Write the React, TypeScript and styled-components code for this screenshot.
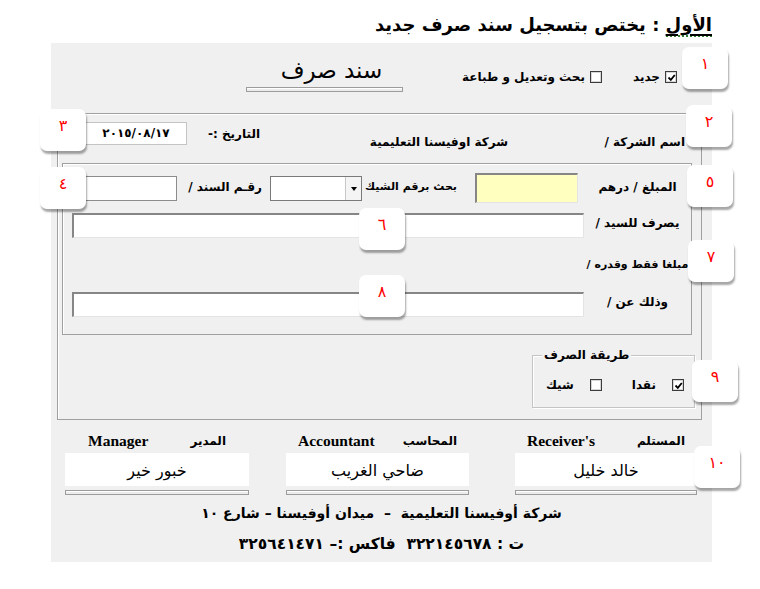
import React from 'react';
import styled, { createGlobalStyle } from 'styled-components';

const AR = `'DejaVu Sans', 'Liberation Sans', sans-serif`;
const SERIF = `'Liberation Serif', 'DejaVu Serif', serif`;

const GlobalStyle = createGlobalStyle`
  html, body {
    margin: 0;
    padding: 0;
    background: #fff;
  }
  body {
    font-family: ${AR};
  }
`;

const Page = styled.div`
  position: relative;
  width: 760px;
  height: 589px;
  overflow: hidden;
`;

const Heading = styled.h1`
  margin: 0;
  height: 43px;
  box-sizing: border-box;
  padding: 12px 48px 0 0;
  direction: rtl;
  font: bold 18px ${AR};
  line-height: 26px;
  color: #000;
`;

const Underlined = styled.span`
  text-decoration: underline;
  text-decoration-thickness: 2px;
  text-underline-offset: 3px;
  border-bottom: 2px dotted #2f7d32;
`;

const Panel = styled.div`
  margin-left: 51px;
  width: 661px;
  height: 519px;
  background: #f0f0f0;
  direction: rtl;
  display: flex;
  flex-direction: column;
`;

const TopBar = styled.div`
  height: 70px;
  display: grid;
  grid-template-columns: 309px 157px;
  align-items: start;
`;

const CheckRow = styled.div<{ $pad: string; $gap: number }>`
  display: flex;
  align-items: center;
  padding: ${p => p.$pad};
  gap: ${p => p.$gap}px;
`;

const CheckItem = styled.label<{ $gap: number }>`
  display: flex;
  align-items: center;
  gap: ${p => p.$gap}px;
`;

const Box = styled.span`
  box-sizing: border-box;
  width: 12px;
  height: 12px;
  background: #fff;
  border: 1px solid #3c3c3c;
  box-shadow: inset 0 0 0 1px #d6d6d6;
  display: flex;
  align-items: center;
  justify-content: center;
  flex: none;
`;

const Label = styled.span<{ $size?: number }>`
  font: bold ${p => p.$size ?? 12}px ${AR};
  line-height: 18px;
  color: #000;
  white-space: nowrap;
`;

const TitleBlock = styled.div`
  display: flex;
  flex-direction: column;
  align-items: center;
  padding-top: 12px;
`;

const Title = styled.div`
  font: 23px ${AR};
  line-height: 31px;
  color: #000;
  padding-left: 14px;
`;

const Groove = styled.div<{ $w: number; $mt: number }>`
  box-sizing: border-box;
  width: ${p => p.$w}px;
  height: 5px;
  margin-top: ${p => p.$mt}px;
  border: 1px solid #9c9c9c;
  background: #ececec;
  box-shadow: inset 0 1px 0 #fff;
`;

const Frame = styled.div`
  box-sizing: border-box;
  margin: 0 10px 0 6px;
  height: 307px;
  border: 1px solid #a0a0a0;
  box-shadow: inset 1px 1px 0 #fff;
  display: flex;
  flex-direction: column;
`;

const CompanyRow = styled.div`
  height: 49px;
  display: flex;
  align-items: flex-start;
  padding-right: 16px;
`;

const Cell = styled.div<{ $w: number; $mt: number; $pr?: number }>`
  width: ${p => p.$w}px;
  margin-top: ${p => p.$mt}px;
  padding-right: ${p => p.$pr ?? 0}px;
  box-sizing: border-box;
  flex: none;
`;

const DateField = styled.div`
  box-sizing: border-box;
  width: 102px;
  height: 23px;
  margin-top: 8px;
  background: #fff;
  border: 1px solid #c4c4c4;
  direction: ltr;
  font: bold 12px ${AR};
  line-height: 21px;
  text-align: center;
  flex: none;
`;

const InnerFrame = styled.div`
  box-sizing: border-box;
  height: 172px;
  margin: 0 9px 0 4px;
  border: 1px solid #a0a0a0;
  box-shadow: inset 1px 1px 0 #fff;
  padding-top: 9px;
  display: flex;
  flex-direction: column;
`;

const FormRow = styled.div<{ $h: number; $mt?: number; $align?: string }>`
  display: flex;
  align-items: ${p => p.$align ?? 'center'};
  height: ${p => p.$h}px;
  margin-top: ${p => p.$mt ?? 0}px;
`;

const RowLabel = styled.div<{ $mb?: number; $mt?: number }>`
  width: 107px;
  flex: none;
  text-align: center;
  margin-bottom: ${p => p.$mb ?? 0}px;
  margin-top: ${p => p.$mt ?? 0}px;
`;

const SunkenField = styled.div<{ $w: number; $h?: number; $bg?: string; $mr?: number }>`
  box-sizing: border-box;
  width: ${p => p.$w}px;
  height: ${p => p.$h ?? 25}px;
  margin-right: ${p => p.$mr ?? 0}px;
  background: ${p => p.$bg ?? '#fff'};
  border-style: solid;
  border-width: 2px 1px 1px 2px;
  border-color: #868686 #e4e4e4 #e4e4e4 #868686;
  flex: none;
`;

const FlatField = styled.div<{ $w: number }>`
  box-sizing: border-box;
  width: ${p => p.$w}px;
  height: 25px;
  background: #fff;
  border: 1px solid #8c8c8c;
  flex: none;
`;

const Combo = styled.div`
  box-sizing: border-box;
  width: 92px;
  height: 25px;
  background: #fff;
  border: 1px solid #7a7a7a;
  display: flex;
  direction: ltr;
  justify-content: flex-end;
  flex: none;
`;

const ComboButton = styled.div`
  width: 15px;
  border-left: 1px solid #c8c8c8;
  background: #f4f4f4;
  display: flex;
  align-items: center;
  justify-content: center;
`;

const Arrow = styled.span`
  width: 0;
  height: 0;
  margin-top: 2px;
  border-left: 3px solid transparent;
  border-right: 3px solid transparent;
  border-top: 4px solid #000;
`;

const PayGroup = styled.div`
  position: relative;
  box-sizing: border-box;
  align-self: flex-start;
  width: 163px;
  height: 53px;
  margin: 20px 6px 0 0;
  border: 1px solid #c4c4c4;
  box-shadow: inset 1px 1px 0 #fff, 1px 1px 0 #fff;
`;

const Legend = styled.span`
  position: absolute;
  top: -10px;
  left: 9px;
  padding: 0 2px;
  background: #f0f0f0;
  font: bold 12px ${AR};
  line-height: 18px;
`;

const Signatures = styled.div`
  display: flex;
  padding-right: 15px;
  margin-top: 12px;
`;

const SignColumn = styled.div<{ $w: number; $ml: number }>`
  width: ${p => p.$w}px;
  margin-left: ${p => p.$ml}px;
  display: flex;
  flex-direction: column;
  flex: none;
`;

const SignLabels = styled.div<{ $pad: number }>`
  display: flex;
  justify-content: space-between;
  align-items: center;
  height: 18px;
  padding: 0 ${p => p.$pad}px;
`;

const English = styled.span`
  font: bold 15.5px ${SERIF};
  color: #000;
`;

const NameBox = styled.div`
  height: 33px;
  margin-top: 3px;
  background: #fff;
  font: 16px ${AR};
  line-height: 36px;
  text-align: center;
  color: #000;
`;

const Footer = styled.div`
  text-align: center;
  color: #000;
`;

const FooterLine = styled.div<{ $size: number; $mt: number; $lh: number }>`
  font: bold ${p => p.$size}px ${AR};
  line-height: ${p => p.$lh}px;
  margin-top: ${p => p.$mt}px;
  white-space: pre;
`;

const Callout = styled.div<{ $x: number; $y: number }>`
  position: absolute;
  left: ${p => p.$x}px;
  top: ${p => p.$y}px;
  width: 46px;
  height: 42px;
  box-sizing: border-box;
  padding-top: 7px;
  background: #fff;
  border-radius: 7px;
  box-shadow: 1px 3px 2px rgba(0, 0, 0, 0.35);
  color: #f00;
  font: 16px ${AR};
  line-height: 20px;
  text-align: center;
`;

const callouts = [
  { n: '١', x: 682, y: 47 },
  { n: '٢', x: 686, y: 105 },
  { n: '٣', x: 40, y: 109 },
  { n: '٤', x: 40, y: 167 },
  { n: '٥', x: 687, y: 165 },
  { n: '٦', x: 359, y: 208 },
  { n: '٧', x: 688, y: 240 },
  { n: '٨', x: 359, y: 275 },
  { n: '٩', x: 692, y: 360 },
  { n: '١٠', x: 694, y: 446 },
];

const signers = [
  { ar: 'المستلم', en: "Receiver's", name: 'خالد خليل', w: 182, ml: 46, pad: 12 },
  { ar: 'المحاسب', en: 'Accountant', name: 'ضاحي الغريب', w: 183, ml: 37, pad: 12 },
  { ar: 'المدير', en: 'Manager', name: 'خبور خير', w: 184, ml: 0, pad: 23 },
];

function Check({ checked }: { checked?: boolean }) {
  return (
    <Box>
      {checked && (
        <svg width='9' height='9' viewBox='0 0 9 9'>
          <polyline points='1.5,4.5 3.8,6.8 7.8,2' fill='none' stroke='#000' strokeWidth='1.8' />
        </svg>
      )}
    </Box>
  );
}

export default function App() {
  return (
    <Page>
      <GlobalStyle />
      <Heading>
        <Underlined>الأول</Underlined> : يختص بتسجيل سند صرف جديد
      </Heading>

      <Panel>
        <TopBar>
          <CheckRow $pad='25px 35px 0 0' $gap={31}>
            <CheckItem $gap={5}>
              <Check checked />
              <Label>جديد</Label>
            </CheckItem>
            <CheckItem $gap={5}>
              <Check />
              <Label>بحث وتعديل و طباعة</Label>
            </CheckItem>
          </CheckRow>
          <TitleBlock>
            <Title>سند صرف</Title>
            <Groove $w={157} $mt={1} />
          </TitleBlock>
        </TopBar>

        <Frame>
          <CompanyRow>
            <Cell $w={177} $mt={17}>
              <Label>اسم الشركة /</Label>
            </Cell>
            <Cell $w={248} $mt={17}>
              <Label>شركة اوفيسنا التعليمية</Label>
            </Cell>
            <Cell $w={73} $mt={9}>
              <Label>التاريخ :-</Label>
            </Cell>
            <DateField>٢٠١٥/٠٨/١٧</DateField>
          </CompanyRow>

          <InnerFrame>
            <FormRow $h={30}>
              <RowLabel $mb={4}>
                <Label>المبلغ / درهم</Label>
              </RowLabel>
              <SunkenField $w={103} $h={30} $bg='#ffffc0' $mr={6} />
              <Cell $w={113} $mt={-6} $pr={18}>
                <Label $size={11}>بحث برقم الشيك</Label>
              </Cell>
              <Combo>
                <ComboButton>
                  <Arrow />
                </ComboButton>
              </Combo>
              <Cell $w={93} $mt={-4} $pr={8}>
                <Label>رقـم السند /</Label>
              </Cell>
              <FlatField $w={92} />
            </FormRow>

            <FormRow $h={25} $mt={10}>
              <RowLabel $mb={7}>
                <Label>يصرف للسيد /</Label>
              </RowLabel>
              <SunkenField $w={512} />
            </FormRow>

            <FormRow $h={54} $align='flex-start'>
              <RowLabel $mt={15}>
                <Label $size={11}>مبلغا فقط وقدره /</Label>
              </RowLabel>
            </FormRow>

            <FormRow $h={25}>
              <RowLabel $mb={7}>
                <Label>وذلك عن /</Label>
              </RowLabel>
              <SunkenField $w={512} />
            </FormRow>
          </InnerFrame>

          <PayGroup>
            <Legend>طريقة الصرف</Legend>
            <CheckRow $pad='20px 10px 0 0' $gap={30}>
              <CheckItem $gap={16}>
                <Check checked />
                <Label>نقدا</Label>
              </CheckItem>
              <CheckItem $gap={16}>
                <Check />
                <Label>شيك</Label>
              </CheckItem>
            </CheckRow>
          </PayGroup>
        </Frame>

        <Signatures>
          {signers.map(s => (
            <SignColumn key={s.en} $w={s.w} $ml={s.ml}>
              <SignLabels $pad={s.pad}>
                <Label>{s.ar}</Label>
                <English>{s.en}</English>
              </SignLabels>
              <NameBox>{s.name}</NameBox>
              <Groove $w={s.w} $mt={4} />
            </SignColumn>
          ))}
        </Signatures>

        <Footer>
          <FooterLine $size={14} $mt={5} $lh={26}>
            شركة أوفيسنا التعليمية  –  ميدان أوفيسنا – شارع ١٠
          </FooterLine>
          <FooterLine $size={15.5} $mt={8} $lh={20}>
            ت : ٣٢٢١٤٥٦٧٨  فاكس :– ٣٢٥٦٤١٤٧١
          </FooterLine>
        </Footer>
      </Panel>

      {callouts.map(c => (
        <Callout key={c.n} $x={c.x} $y={c.y}>
          {c.n}
        </Callout>
      ))}
    </Page>
  );
}
